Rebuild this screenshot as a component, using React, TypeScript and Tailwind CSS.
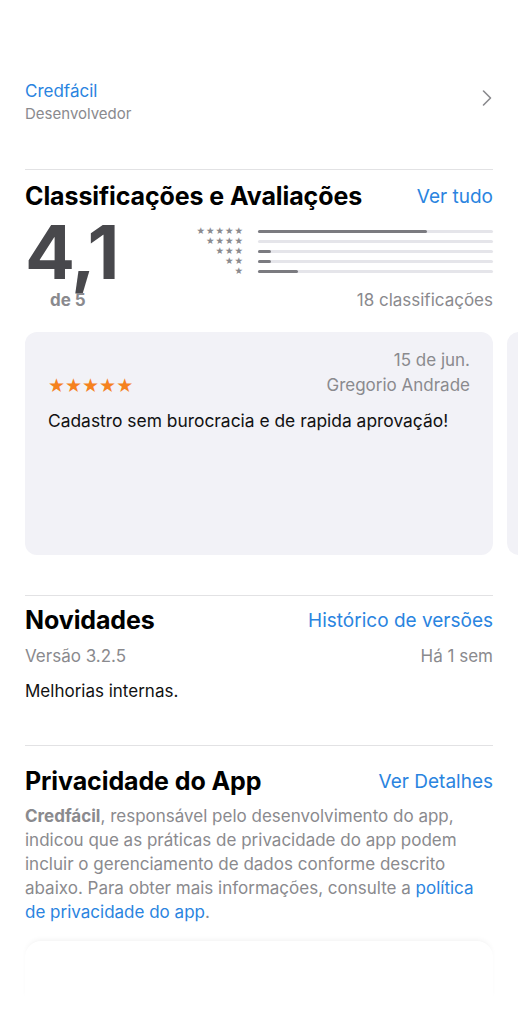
import { ChevronRight } from "lucide-react";

const bars = [
  { stars: 5, fill: 0.72 },
  { stars: 4, fill: 0 },
  { stars: 3, fill: 0.055 },
  { stars: 2, fill: 0.055 },
  { stars: 1, fill: 0.17 },
];

function Header({ title, link }: { title: string; link: string }) {
  return (
    <div className="flex items-center justify-between h-[30px]">
      <h2 className="text-[25px] font-bold tracking-[-0.1px] text-black">{title}</h2>
      <span className="text-[19px] text-[#2a84e0]">{link}</span>
    </div>
  );
}

export default function App() {
  return (
    <div
      className="min-h-[1024px] bg-white overflow-hidden"
      style={{ fontFamily: "Inter, 'Liberation Sans', sans-serif" }}
    >
      <div className="px-[25px] pt-[80px]">
        {/* Developer */}
        <div className="flex items-center justify-between">
          <div>
            <div className="text-[17px] leading-[22px] text-[#2a84e0]">Credfácil</div>
            <div className="mt-[2px] text-[15px] leading-[20px] text-[#8a8a8e]">Desenvolvedor</div>
          </div>
          <ChevronRight className="w-[28px] h-[28px] text-[#8a8a8e] -mr-[8px] -mt-[8px]" strokeWidth={1.4} />
        </div>

        <div className="mt-[45px] h-px bg-[#e2e2e4]" />

        {/* Ratings */}
        <div className="mt-[12px]">
          <Header title="Classificações e Avaliações" link="Ver tudo" />
          <div className="flex mt-[4px]">
            <div className="w-[165px] flex flex-col">
              <span className="text-[74px] font-bold leading-[72px] tracking-[-1.5px] text-[#48484c]">4,1</span>
              <span className="ml-[25px] mt-[2px] text-[17px] font-bold leading-[20px] text-[#8a8a8e]">de 5</span>
            </div>
            <div className="flex-1 flex flex-col">
              <div className="flex flex-col pt-[10px]">
                {bars.map((b) => (
                  <div key={b.stars} className="flex items-center h-[10px]">
                    <span
                      className="w-[54px] text-right text-[9.5px] leading-[10px] tracking-[1px] text-[#8a8a8e]"
                      style={{ fontFamily: "'DejaVu Sans', sans-serif" }}
                    >
                      {"★".repeat(b.stars)}
                    </span>
                    <div className="ml-[14px] flex-1 h-[3px] rounded-full bg-[#e5e5ea]">
                      <div
                        className="h-full rounded-full bg-[#7b7b80]"
                        style={{ width: `${b.fill * 100}%` }}
                      />
                    </div>
                  </div>
                ))}
              </div>
              <div className="mt-[13px] text-right text-[17px] leading-[22px] text-[#8a8a8e]">18 classificações</div>
            </div>
          </div>
        </div>
      </div>

      {/* Reviews carousel */}
      <div className="mt-[21px] pl-[25px] flex gap-[14px] overflow-hidden">
        <div className="shrink-0 w-[468px] h-[223px] rounded-[12px] bg-[#f2f2f7] px-[23px] pt-[17px]">
          <div className="text-right text-[17px] leading-[22px] text-[#8a8a8e]">15 de jun.</div>
          <div className="flex items-center justify-between mt-[3px]">
            <span
              className="text-[19px] leading-[22px] text-[#f5821f]"
              style={{ fontFamily: "'DejaVu Sans', sans-serif" }}
            >
              ★★★★★
            </span>
            <span className="text-[17px] leading-[22px] text-[#8a8a8e]">Gregorio Andrade</span>
          </div>
          <p className="mt-[14px] text-[17.4px] leading-[22px] text-[#111]">
            Cadastro sem burocracia e de rapida aprovação!
          </p>
        </div>
        <div className="shrink-0 w-[468px] h-[223px] rounded-[12px] bg-[#f2f2f7]" />
      </div>

      <div className="px-[25px]">
        <div className="mt-[40px] h-px bg-[#e2e2e4]" />

        {/* Novidades */}
        <div className="mt-[10px]">
          <Header title="Novidades" link="Histórico de versões" />
          <div className="mt-[9px] flex justify-between text-[17px] leading-[22px] text-[#8a8a8e]">
            <span>Versão 3.2.5</span>
            <span>Há 1 sem</span>
          </div>
          <p className="mt-[13px] text-[17px] leading-[22px] text-[#111]">Melhorias internas.</p>
        </div>

        <div className="mt-[43px] h-px bg-[#e2e2e4]" />

        {/* Privacidade */}
        <div className="mt-[21px]">
          <Header title="Privacidade do App" link="Ver Detalhes" />
          <p className="mt-[7px] text-[17px] leading-[24px] text-[#8a8a8e]">
            <span className="font-bold">Credfácil</span>, responsável pelo desenvolvimento do app,
            indicou que as práticas de privacidade do app podem incluir o gerenciamento de dados
            conforme descrito abaixo. Para obter mais informações, consulte a{" "}
            <span className="text-[#2a84e0]">política de privacidade do app</span>.
          </p>
        </div>

        <div className="mt-[17px] h-[60px] rounded-t-[16px] bg-white shadow-[0_-3px_6px_-3px_rgba(0,0,0,0.08)]" />
      </div>
    </div>
  );
}
